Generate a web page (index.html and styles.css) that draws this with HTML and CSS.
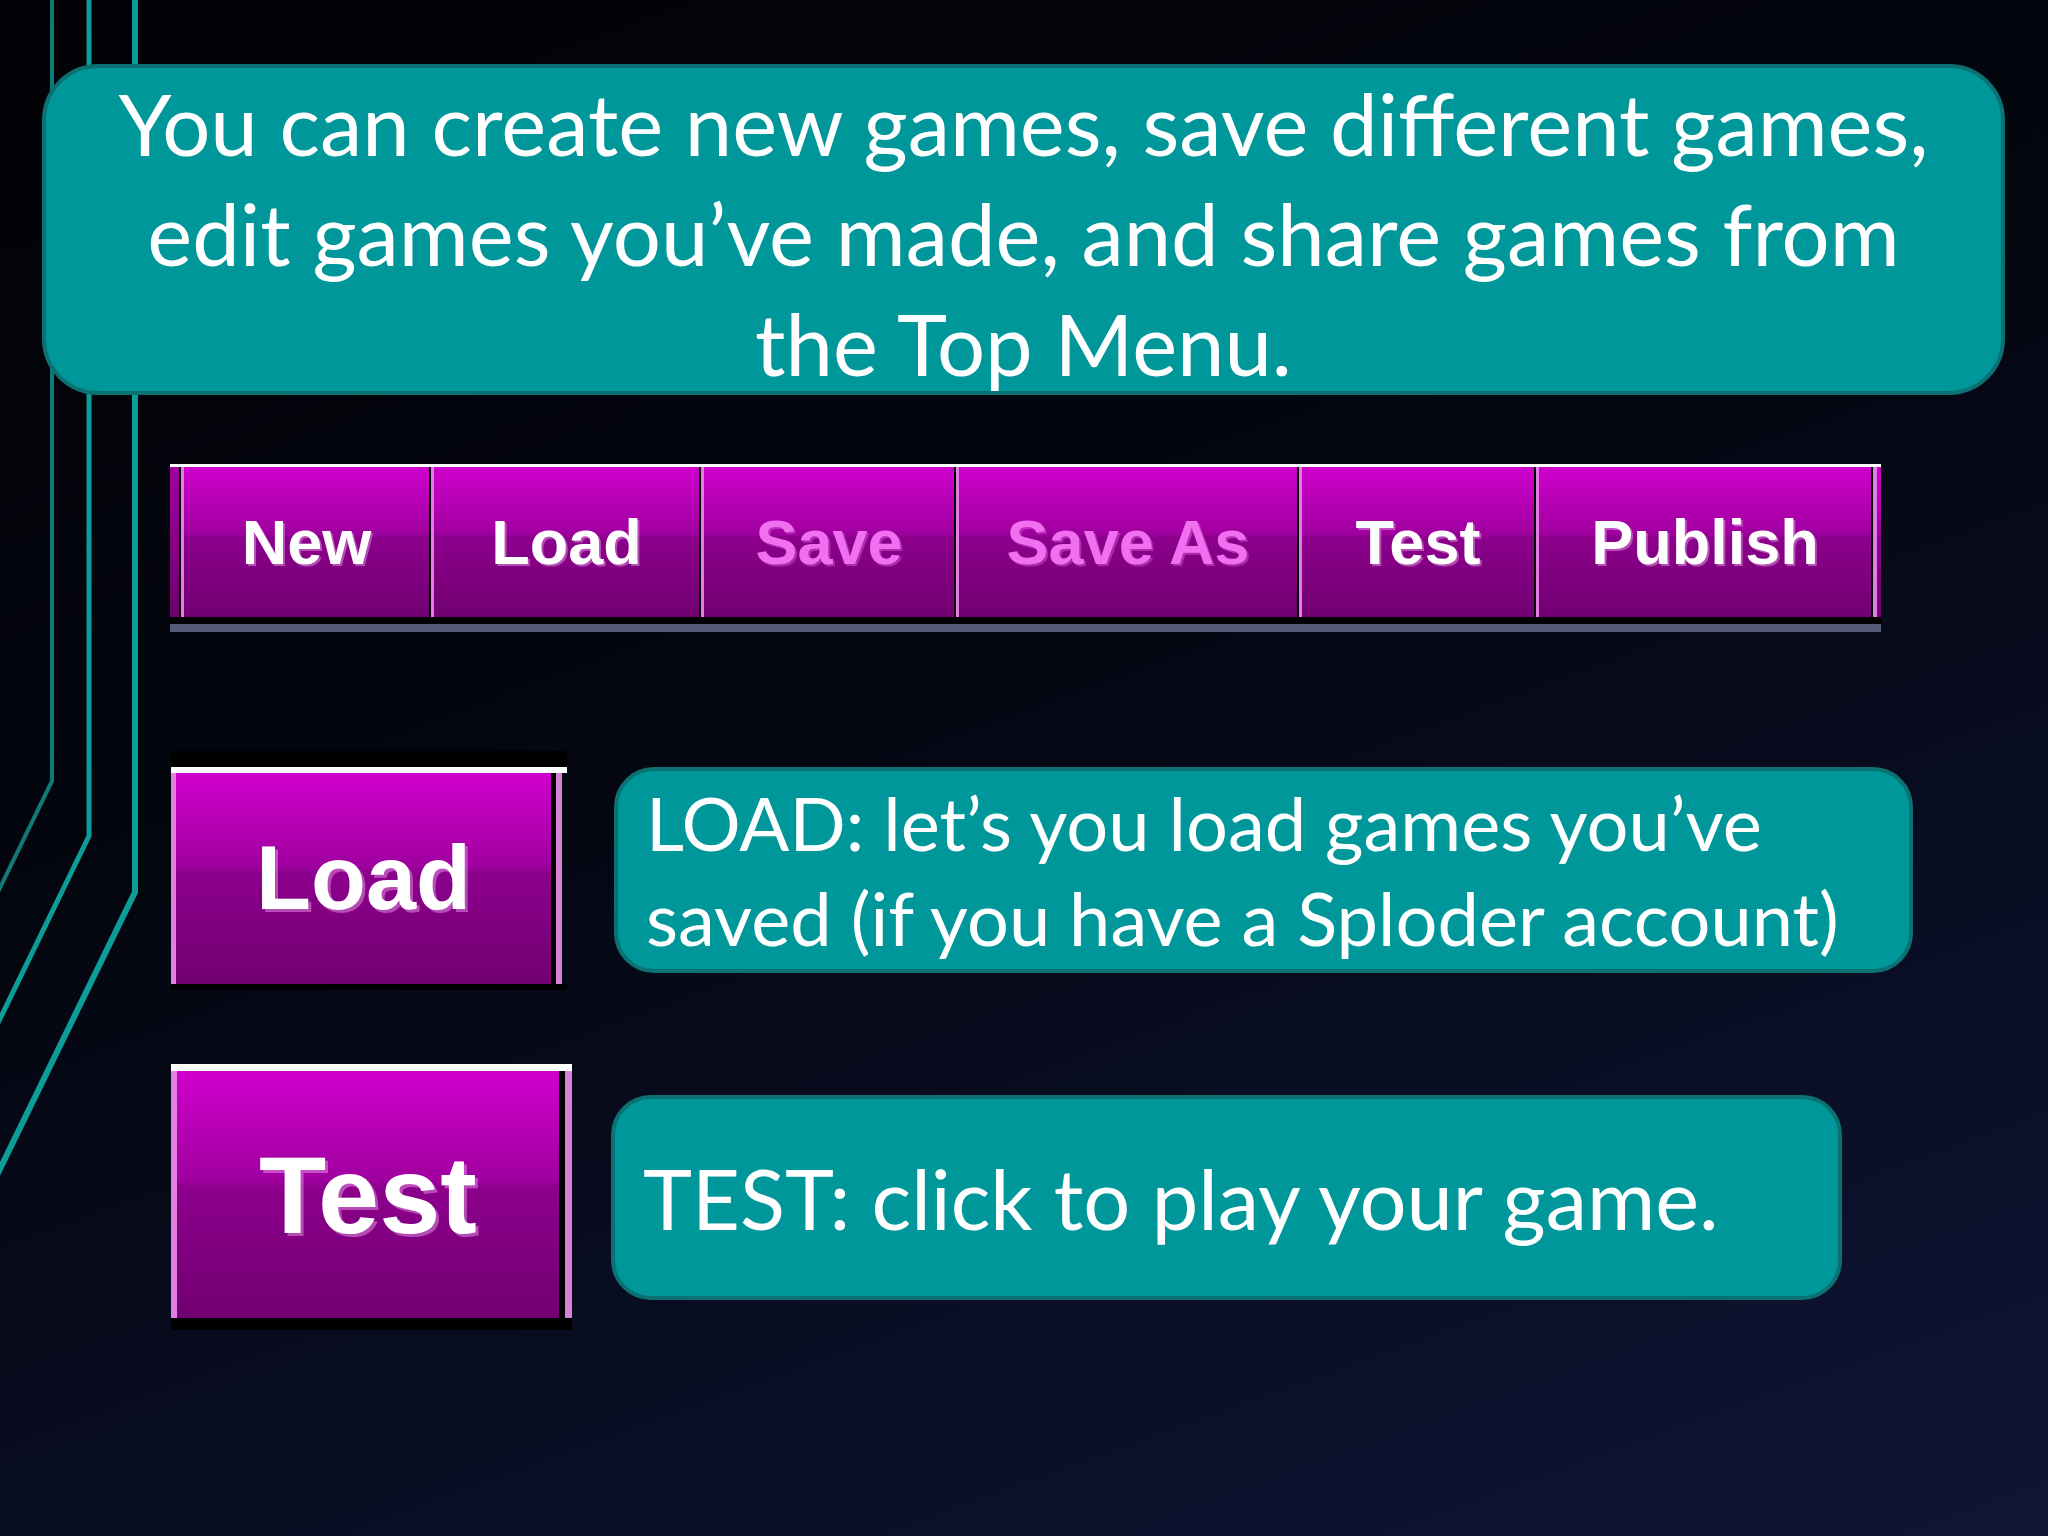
FILE: index.html
```html
<!DOCTYPE html>
<html lang="en">
<head>
    <meta charset="UTF-8">
    <title>Sploder Top Menu</title>
    <link rel="stylesheet" href="styles.css">
</head>
<body>
    <div class="slide">
        <!-- circuit traces on the left edge, behind everything -->
        <svg class="circuit" width="200" height="1200" viewBox="0 0 200 1200">
            <polyline class="trace trace-dim" points="52,-5 52,781 -3,894"/>
            <polyline class="trace" points="89,-5 89,836 -3,1025"/>
            <polyline class="trace trace-wide" points="135,-5 135,892 -3,1175"/>
        </svg>

        <div class="intro">
            You can create new games, save different games,<br>
            edit games you’ve made, and share games from<br>
            the Top Menu.
        </div>

        <div class="menubar">
            <div class="menu-row">
                <div class="menu-cap menu-cap-left"></div>
                <div class="menu-btn btn-new">New</div>
                <div class="menu-btn btn-load">Load</div>
                <div class="menu-btn btn-save off">Save</div>
                <div class="menu-btn btn-saveas off">Save As</div>
                <div class="menu-btn btn-test">Test</div>
                <div class="menu-btn btn-publish">Publish</div>
                <div class="menu-cap menu-cap-right"></div>
            </div>
        </div>

        <div class="feature feature-load">
            <div class="big-btn big-btn-load">
                <div class="big-face">Load</div>
            </div>
            <div class="callout callout-load">
                LOAD: let’s you load games you’ve<br>
                saved (if you have a Sploder account)
            </div>
        </div>

        <div class="feature feature-test">
            <div class="big-btn big-btn-test">
                <div class="big-face">Test</div>
            </div>
            <div class="callout callout-test">
                TEST: click to play your game.
            </div>
        </div>
    </div>
</body>
</html>
```

FILE: styles.css
```css
html, body {
    margin: 0;
    padding: 0;
}
body {
    background: #03040a;
}
.slide {
    position: relative;
    width: 2048px;
    height: 1536px;
    overflow: hidden;
    background: linear-gradient(160deg, #020206 0%, #04060f 40%, #0a0f26 75%, #0f1636 100%);
    font-family: Lato, "Open Sans", sans-serif;
    color: #fff;
}
.circuit {
    position: absolute;
    top: 0;
    left: 0;
}
.trace { fill: none; stroke: #0e9c99; stroke-width: 5; stroke-linejoin: miter; }
.trace-dim { stroke: #107a7a; stroke-width: 4; }
.trace-wide { stroke-width: 6; }

/* teal speech boxes */
.intro, .callout {
    position: relative;
    box-sizing: border-box;
    background: #00979a;
    border: 4px solid #0b7172;
}
.intro {
    margin: 64px 43px 0 42px;
    height: 331px;
    border-radius: 56px;
    font-size: 85px;
    line-height: 110px;
    text-align: center;
}
.callout {
    border-radius: 40px;
    display: flex;
    align-items: center;
    padding-left: 28px;
}
.callout-load {
    margin-left: 47px;
    width: 1299px;
    height: 206px;
    font-size: 74px;
    line-height: 95px;
}
.callout-test {
    margin-left: 39px;
    margin-top: 31px;
    width: 1231px;
    height: 205px;
    font-size: 83px;
    line-height: 110px;
}

/* the editor top menu */
.menubar {
    position: relative;
    margin: 69px 0 0 170px;
    width: 1711px;
    background: #000;
    border-top: 3px solid #fff;
    border-bottom: 8px solid #535b76;
    padding-bottom: 7px;
}
.menu-row {
    display: flex;
    height: 150px;
}
.menu-btn, .menu-cap, .big-face {
    background: linear-gradient(180deg, #cf00cc 0%, #b800b6 22%, #a000a0 44%, #8c008c 47%, #7e007e 75%, #720072 100%);
}
.menu-btn {
    box-sizing: border-box;
    display: flex;
    align-items: center;
    justify-content: center;
    border-left: 3px solid #e27ee2;
    border-right: 2px solid #000;
    font-family: "Liberation Sans", Arial, sans-serif;
    font-weight: bold;
    font-size: 63px;
    color: #fff;
    text-shadow: 2px 2px 0 rgba(240, 170, 240, 0.45);
}
.menu-btn.off {
    color: #f070f0;
    text-shadow: 2px 2px 0 rgba(255, 150, 255, 0.3);
}
.btn-new { width: 250px; }
.btn-load { width: 270px; }
.btn-save { width: 255px; }
.btn-saveas { width: 343px; }
.btn-test { width: 237px; }
.btn-publish { width: 337px; }
.menu-cap {
    box-sizing: border-box;
}
.menu-cap-left {
    width: 11px;
    border-right: 2px solid #000;
    background: linear-gradient(180deg, #a000a0, #6e006e);
}
.menu-cap-right {
    width: 8px;
    border-left: 4px solid #e27ee2;
}

/* big buttons next to the callouts */
.feature {
    display: flex;
    align-items: flex-start;
    margin-left: 171px;
}
.feature-load { margin-top: 135px; }
.feature-test { margin-top: 74px; }
.big-btn {
    box-sizing: border-box;
    border-top: 6px solid #fff;
}
.big-face {
    box-sizing: border-box;
    display: flex;
    align-items: center;
    justify-content: center;
    border-left: 5px solid #e080e0;
    border-right: 5px solid #000;
    font-family: "Liberation Sans", Arial, sans-serif;
    font-weight: bold;
    color: #fff;
    text-shadow: 3px 3px 0 rgba(240, 170, 240, 0.45);
}
.big-btn-load {
    width: 396px;
    border-bottom: 6px solid #000;
    box-shadow: 0 -16px 0 #000;
}
.big-btn-load .big-face {
    width: 385px;
    height: 211px;
    font-size: 90px;
    box-shadow: 6px 0 0 #d680d6;
}
.big-btn-test {
    width: 401px;
    border-top-width: 7px;
    border-bottom: 12px solid #000;
}
.big-btn-test .big-face {
    width: 394px;
    height: 247px;
    font-size: 110px;
    border-left-width: 6px;
    border-right-width: 6px;
    box-shadow: 7px 0 0 #d680d6;
}
```
